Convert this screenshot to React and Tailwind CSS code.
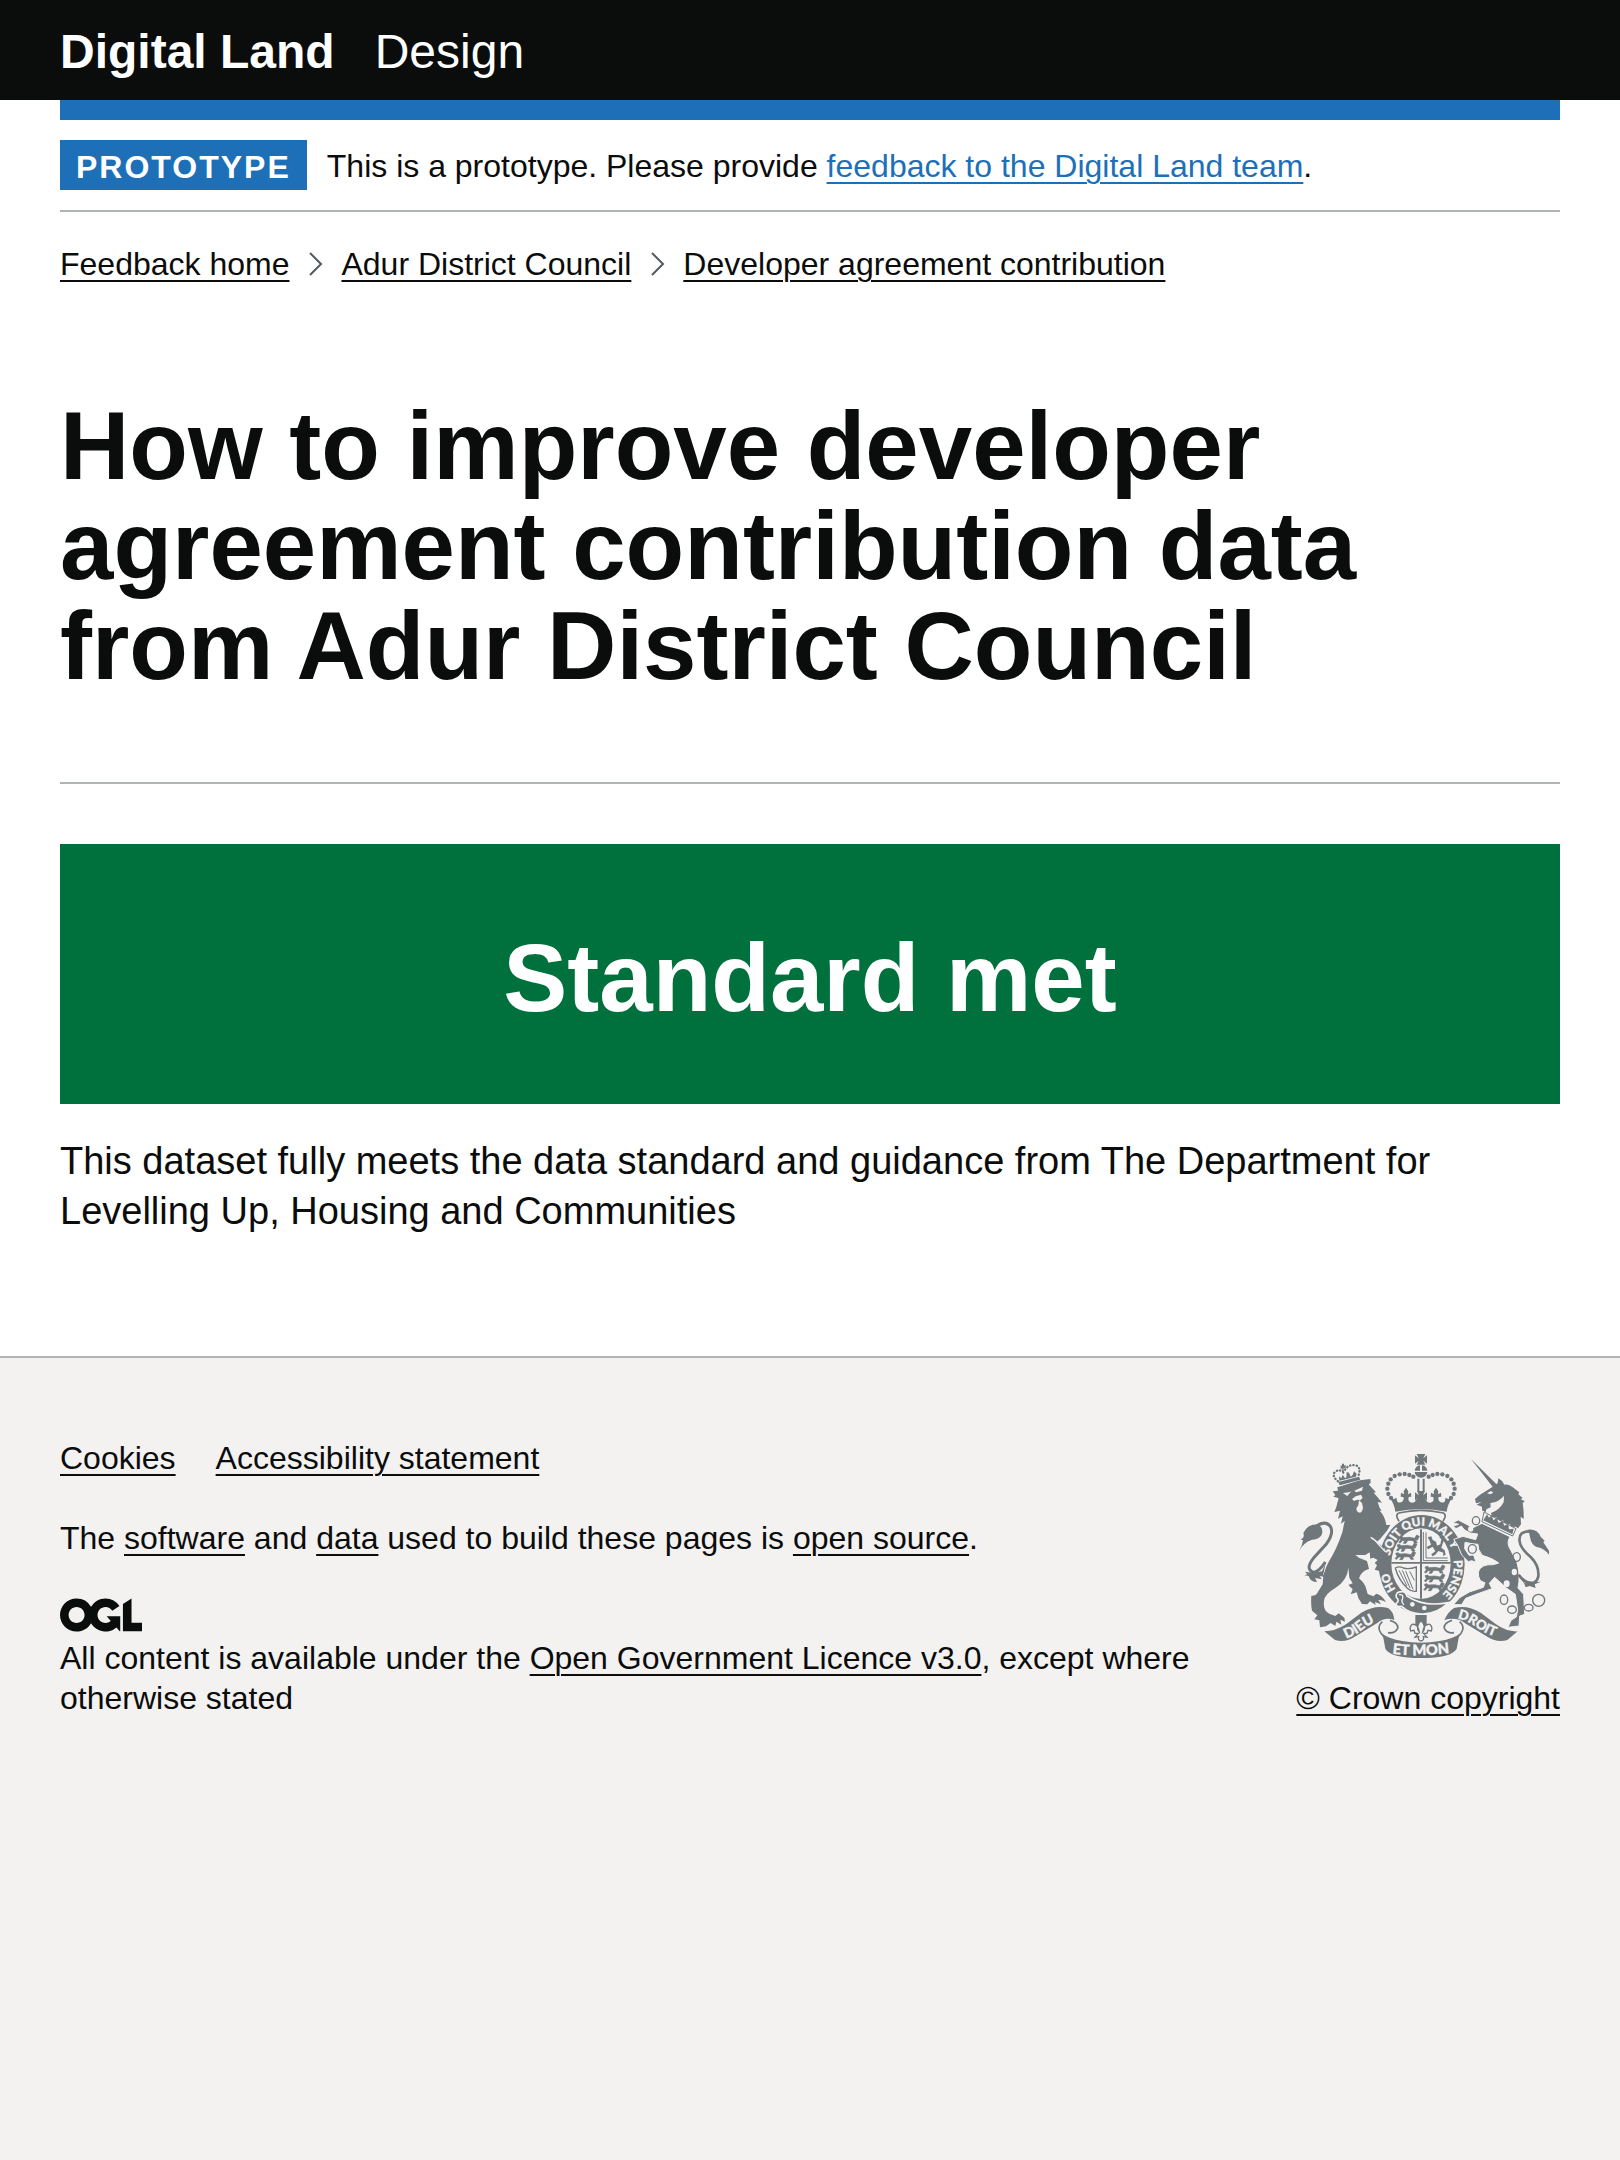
const linkClass = "underline decoration-2 underline-offset-[5px] hover:decoration-4";

const armsLetters = "fill-[#f3f2f1] font-['Lato','Noto_Sans',sans-serif] font-black";

function CrownDots() {
  const dots = [
    [400, 134], [388, 129], [374, 126], [359, 127], [344, 132], [332, 142], [325, 155], [322, 170], [325, 186], [333, 198],
  ];
  return dots.map(([x, y]) => (
    <g key={`${x}-${y}`}>
      <circle cx={x} cy={y} r="6.5" />
      <circle cx={846 - x} cy={y} r="6.5" />
    </g>
  ));
}

function Chain({ light }) {
  return light ? (
    <g fill="#f3f2f1">
      <ellipse cx="703" cy="420" rx="8" ry="10" />
      <ellipse cx="680" cy="455" rx="9" ry="10" />
      <ellipse cx="572" cy="291" rx="8" ry="8" />
    </g>
  ) : (
    <g fill="none" stroke="#6f777b" strokeWidth="4">
      <ellipse cx="588" cy="266" rx="11" ry="12" />
      <ellipse cx="577" cy="351" rx="12" ry="13" />
      <ellipse cx="710" cy="375" rx="11" ry="13" />
      <ellipse cx="672" cy="503" rx="11" ry="14" />
      <ellipse cx="696" cy="533" rx="13" ry="11" />
      <ellipse cx="746" cy="527" rx="13" ry="10" />
      <circle cx="776" cy="505" r="18" />
    </g>
  );
}

function PassantLion({ x, y }) {
  return (
    <g transform={`translate(${x} ${y})`}>
      <path d="M0 2L8 0L12 4L30 3L46 6L52 -4L60 0L54 12L48 10L54 20L45 20L42 13L26 12L20 21L12 21L17 13L9 13L3 20L-2 18L4 11Z" stroke="#6f777b" strokeWidth="2" />
    </g>
  );
}

function RoyalArms() {
  return (
    <svg viewBox="57 66 750 612" className="h-[204px] w-[250px]" fill="#6f777b" aria-hidden="true">
      {/* central crown */}
      <path d="M410 66H436L430 79L441 70V95L430 86L436 98H410L416 86L405 95V70L416 79Z" />
      <path d="M404 116Q406 102 420 100V116ZM426 100Q440 102 442 116H426ZM404 120H442Q440 136 423 137Q406 136 404 120Z" />
      <path d="M412 140H418V178H412ZM428 140H434V178H428Z" />
      <CrownDots />
      <path d="M330 199Q340 204 349 197L352 209Q360 215 368 208Q374 202 370 195L362 194L363 182L372 187L371 178L378 167L385 178L384 187L393 182L394 194L386 195Q383 204 389 210Q400 215 407 207L411 198L405 207V181L417 190L411 177H435L429 190L441 181V207L435 198L439 207Q446 215 457 210Q463 204 460 195L452 194L453 182L462 187L461 178L468 167L475 178L474 187L483 182L484 194L476 195Q472 202 478 208Q486 215 494 209L497 197Q506 204 516 199Q503 216 500 239Q423 225 346 239Q343 216 330 199Z" />
      <path d="M356 243Q423 227 490 243Q499 249 494 258L489 268M356 243Q347 249 352 258L357 268" fill="none" stroke="#6f777b" strokeWidth="5" />

      {/* garter and quartered shield */}
      <ellipse cx="425" cy="397" rx="129" ry="148" />
      <path d="M292 350Q304 300 334 281" fill="none" stroke="#f3f2f1" strokeWidth="4" />
      <ellipse cx="423" cy="395" rx="89" ry="106" fill="#f3f2f1" />
      <path d="M420 292H426V500H420ZM334 390H512V395H334Z" />
      <path d="M430 300V386H503M438 301V378H503" fill="none" stroke="#6f777b" strokeWidth="3" />
      <PassantLion x={358} y={313} />
      <PassantLion x={351} y={337} />
      <PassantLion x={347} y={362} />
      <PassantLion x={435} y={403} />
      <PassantLion x={435} y={429} />
      <PassantLion x={433} y={455} />
      <path d="M443 316L454 313L458 324L468 329L471 341L481 337L484 322L477 314L485 312L491 326L484 347L494 355L497 368L489 372L490 362L475 357L466 368L457 373L454 367L466 358L458 344L444 352L440 345L453 338L449 326Z" />
      <g fill="none" stroke="#6f777b" strokeWidth="4">
        <path d="M346 408Q358 401 370 408Q387 413 409 405V478Q394 480 382 469Q355 443 346 408Z" />
        <path d="M357 415L381 462M367 415L390 468M377 417L399 472M389 418L403 445" strokeWidth="3" />
      </g>
      <path id="garter-top" d="M329 374A98 116 0 0 1 521 374A98 116 0 0 1 500 475" fill="none" />
      <path id="garter-right" d="M521 385A97 112 0 0 1 466 502L440 515" fill="none" />
      <path id="garter-left" d="M347 472A98 116 0 0 1 325 390" fill="none" />
      <g className={armsLetters} stroke="#f3f2f1" strokeWidth="1">
        <text fontSize="34"><textPath href="#garter-left">HO</textPath></text>
        <text fontSize="35"><textPath href="#garter-top" startOffset="2">SOIT QUI MAL Y</textPath></text>
        <text fontSize="36"><textPath href="#garter-right">PENSE</textPath></text>
      </g>
      <path d="M352 482Q375 472 381 492Q430 526 506 512Q468 548 425 546Q387 545 365 523Q345 526 349 514Q360 506 349 496Q347 488 352 482Z" stroke="#f3f2f1" strokeWidth="5" />
      <circle cx="397" cy="517" r="7" fill="#f3f2f1" />
      <circle cx="433" cy="528" r="7" fill="#f3f2f1" />
      <path d="M357 488Q371 486 368 499Q362 509 372 518" fill="none" stroke="#f3f2f1" strokeWidth="4" />

      {/* lion */}
      <g>
        <path d="M175 150L237 134L241 143L179 160Z" />
        <path d="M174 148Q153 130 166 119Q178 110 190 121Q205 93 230 101Q244 109 235 132" fill="none" stroke="#6f777b" strokeWidth="7" strokeDasharray="1 9" strokeLinecap="round" />
        <path d="M182 99L186 102V95H192V101L197 98V110L191 107V121H186L187 109L182 111ZM178 146L177 133L184 139L188 128L194 137L199 137L200 120L207 122L212 134L218 129L222 118L230 125L228 134Z" />
        <path d="M158 178L174 176L172 166L240 145L271 141L272 153L266 157L276 168L288 181L281 182Q293 195 306 212L293 210L299 228L305 236L299 236Q315 252 319 279H331L321 296L301 320L291 329Q315 350 328 377L331 403L325 412L330 421L317 424L309 415L304 427L296 416L284 413L291 400L284 393L293 384L280 377L271 380L269 361L256 369H226L238 378L261 387L267 411Q244 417 237 439Q254 454 258 468L263 486L280 493L289 485Q306 489 318 510Q305 503 295 504L303 517L285 510L287 519L270 508L262 517L246 516L235 498L230 481L212 487L218 472L205 459L218 454L208 437L205 407Q202 445 166 468Q133 487 132 507Q128 536 148 545L166 552L176 544L193 557L195 569L181 563L184 578L169 569L166 582L152 573L138 583L120 586L118 565L103 562L112 550L96 536Q92 517 94 491Q105 492 110 486L128 457Q128 422 147 388Q170 352 187 301L194 267L183 275L188 253L174 260L180 236L163 240L169 225L172 212Q176 204 175 198L160 194L166 189Z" />
        <path d="M189 183L207 181L214 178L202 192ZM223 176L249 164L246 176L228 181ZM216 201L227 193L243 188L248 197L241 205L232 203L222 207ZM237 205L246 213Q253 237 241 242Q230 243 229 229L235 220Z" fill="#f3f2f1" />
        <path d="M272 316Q288 324 299 341L317 360" fill="none" stroke="#f3f2f1" strokeWidth="4" />
        <path d="M108 283Q137 264 151 283Q163 303 139 336L100 379Q75 411 99 421Q116 421 136 390" fill="none" stroke="#6f777b" strokeWidth="9" />
        <path d="M57 357Q67 341 69 325L61 322Q75 318 70 303Q84 274 116 278Q130 288 126 306Q121 322 96 323Q70 332 57 357ZM75 419L98 422L126 418L137 394L130 427L134 435L119 432L125 442L105 438L111 450Q91 450 86 432L73 430L82 427Z" />
      </g>

      {/* unicorn */}
      <g>
        <path d="M573 81L652 159L640 167Z" />
        <path d="M643 161L653 153L655 139Q667 145 673 158Q688 155 706 172L718 181L715 187L728 198L722 202L734 207L728 214Q732 238 731 261L722 254L723 277L714 289L707 284L694 285L688 275L676 281L669 265L656 270L649 256L636 254L633 243Q658 235 671 211L672 191Q659 209 631 213L632 226L619 232L617 241L606 235L606 224L590 218L605 210L588 214L585 201L600 188L618 177Z" />
        <path d="M621 184L633 177L640 182L631 187Z" fill="#f3f2f1" />
        <path d="M612 240L708 290L698 312L606 269Z" fill="#f3f2f1" stroke="#6f777b" strokeWidth="3" />
        <path d="M610 265L621 247L627 257L635 250L640 265L650 258L656 273L669 266L672 281L685 276L687 292L701 290L697 307Z" />
        <path d="M606 274L690 314Q677 333 693 356L711 392Q722 430 714 468L731 487L734 547L719 552L717 582L684 586L693 565L709 555L713 534L706 487L678 467L644 436L628 454L636 470L588 487L557 499L545 518L520 518L539 497L568 480L610 466L615 452Q594 449 595 420Q602 396 640 398L656 393Q639 379 607 370Q592 352 594 337L576 335L555 331L554 350L567 370L581 369L588 391L575 386L565 389L545 369L533 340L521 322L549 313L587 323L593 306L570 303L553 293L544 282L528 290L520 282L536 277L518 272L535 264L562 278L577 288Z" stroke="#f3f2f1" strokeWidth="3" />
        <path d="M752 298Q714 296 719 329Q722 350 752 375Q778 401 775 433Q770 459 741 450Q725 442 716 428" fill="none" stroke="#6f777b" strokeWidth="8" />
        <path d="M742 293Q771 288 782 314L794 326L790 331L807 356V368Q790 347 770 345Q754 339 750 316Q750 303 742 293ZM711 427L726 437L734 452L783 449L764 457L767 468L749 462L737 466L732 454Z" />
        <Chain />
        <Chain light />
      </g>

      {/* fleur-de-lis and motto ribbon */}
      <path d="M406 549H440V577L430 586L423 564L416 586L406 577Z" />
      <path d="M423 565Q405 586 418 600Q414 575 397 577Q387 585 392 597L402 595L405 604H415L405 616L416 614Q413 626 423 627Q433 626 430 614L441 616L431 604H441L444 595L454 597Q459 585 449 577Q432 575 428 600Q441 586 423 565Z" fill="#f3f2f1" stroke="#6f777b" strokeWidth="4" />
      <g fill="none" stroke="#6f777b" strokeWidth="5">
        <path d="M330 565Q356 573 353 589Q345 605 324 602M307 569Q289 585 303 604L321 625" />
        <path d="M516 565Q490 573 493 589Q501 605 522 602M539 569Q557 585 543 604L525 625" />
      </g>
      <path d="M133 598Q165 598 198 577L244 542Q285 517 324 528Q340 537 343 564Q316 554 292 573L229 611Q196 634 165 624ZM713 598Q681 600 648 577L602 542Q561 517 522 528Q506 537 493 564Q530 554 554 573L617 611Q650 634 682 624ZM308 606Q325 620 367 627Q423 638 479 627Q521 620 538 606L530 650Q515 678 423 678Q331 678 316 650Z" />
      <path id="motto-left" d="M198 620Q228 609 250 591Q277 570 325 558" fill="none" />
      <path id="motto-middle" d="M337 665Q423 677 540 659" fill="none" />
      <path id="motto-right" d="M532 560Q563 565 591 587Q620 609 680 624" fill="none" />
      <g className={armsLetters} stroke="#f3f2f1" strokeWidth="1">
        <text fontSize="42"><textPath href="#motto-left">DIEU</textPath></text>
        <text fontSize="44"><textPath href="#motto-middle">ET MON</textPath></text>
        <text fontSize="40"><textPath href="#motto-right">DROIT</textPath></text>
      </g>
    </svg>
  );
}

function OglLogo() {
  return (
    <svg viewBox="0 0 483.2 195.7" className="h-[34px] w-[82px]" fill="currentColor" role="img" aria-label="Open Government Licence">
      <path d="M421.5 142.8V.1l-50.7 32.3v161.1h112.4v-50.7zm-122.3-9.6A47.12 47.12 0 0 1 221 97.8c0-26 21.1-47.1 47.1-47.1 16.7 0 31.4 8.7 39.7 21.8l42.7-27.2A97.63 97.63 0 0 0 268.1 0c-36.5 0-68.3 20.1-85.1 49.7A98 98 0 0 0 97.8 0C43.9 0 0 43.9 0 97.8s43.9 97.8 97.8 97.8c36.5 0 68.3-20.1 85.1-49.7a97.76 97.76 0 0 0 149.6 25.4l19.4 22.2h3v-87.8h-80l24.3 27.5zM97.8 145c-26 0-47.1-21.1-47.1-47.1s21.1-47.1 47.1-47.1 47.1 21.1 47.1 47.1S123.8 145 97.8 145" />
    </svg>
  );
}

function Breadcrumbs() {
  const items = ["Feedback home", "Adur District Council", "Developer agreement contribution"];
  return (
    <nav aria-label="Breadcrumb" className="mt-8">
      <ol className="flex flex-wrap items-center text-[32px] leading-[40px]">
        {items.map((item, i) => (
          <li key={item} className="flex items-center">
            {i > 0 && (
              <svg viewBox="0 0 14 24" className="mr-[18px] ml-5 h-6 w-[14px]" fill="none" stroke="#505a5f" strokeWidth="2" aria-hidden="true">
                <path d="M1 1L12 12L1 23" />
              </svg>
            )}
            <a href="#" className={linkClass}>{item}</a>
          </li>
        ))}
      </ol>
    </nav>
  );
}

export default function App() {
  return (
    <div className="flex min-h-screen flex-col bg-[#f3f2f1] font-['Liberation_Sans',Arial,sans-serif] text-[#0b0c0c]">
      <header className="bg-[#0b0c0c] px-[60px] text-white">
        <div className="flex gap-10 pt-[27px] pb-[23px] text-[48px] leading-[50px]">
          <a href="#" className="font-bold">Digital Land</a>
          <a href="#">Design</a>
        </div>
      </header>

      <div className="bg-white px-[60px] pb-[120px]">
        <div className="h-5 bg-[#1d70b8]" />
        <div className="flex items-center gap-5 border-b-2 border-[#b1b4b6] py-5">
          <strong className="bg-[#1d70b8] px-4 pt-[7px] pb-[3px] text-[32px] leading-[40px] tracking-[2px] text-white">PROTOTYPE</strong>
          <p className="pt-[2px] text-[32px] leading-[40px]">
            This is a prototype. Please provide{" "}
            <a href="#" className={`${linkClass} text-[#1d70b8]`}>feedback to the Digital Land team</a>.
          </p>
        </div>
        <Breadcrumbs />

        <main className="pt-[112px]">
          <h1 className="max-w-[1400px] text-[96px] leading-[100px] font-bold">
            How to improve developer agreement contribution data from Adur District Council
          </h1>
          <hr className="mt-[86px] border-t-2 border-[#b1b4b6]" />
          <div className="mt-[60px] bg-[#00703c] px-10 pt-[84px] pb-[76px] text-center text-white">
            <h2 className="text-[96px] leading-[100px] font-bold">Standard met</h2>
          </div>
          <p className="mt-8 text-[38px] leading-[50px]">
            This dataset fully meets the data standard and guidance from The Department for Levelling Up, Housing and Communities
          </p>
        </main>
      </div>

      <footer className="border-t-2 border-[#b1b4b6] px-[60px] pt-20 text-[32px] leading-[40px]">
        <div className="flex items-end justify-between gap-[60px]">
          <div className="max-w-[1170px]">
            <ul className="flex gap-10">
              <li><a href="#" className={linkClass}>Cookies</a></li>
              <li><a href="#" className={linkClass}>Accessibility statement</a></li>
            </ul>
            <p className="mt-10">
              The <a href="#" className={linkClass}>software</a> and <a href="#" className={linkClass}>data</a> used to build these pages is{" "}
              <a href="#" className={linkClass}>open source</a>.
            </p>
            <div className="mt-10 mb-[6px]"><OglLogo /></div>
            <p>
              All content is available under the <a href="#" className={linkClass}>Open Government Licence v3.0</a>, except where otherwise stated
            </p>
          </div>
          <a href="#" className="flex shrink-0 flex-col items-end">
            <span className="mr-[11px] mb-5"><RoyalArms /></span>
            <span className={linkClass}>© Crown copyright</span>
          </a>
        </div>
      </footer>
    </div>
  );
}
